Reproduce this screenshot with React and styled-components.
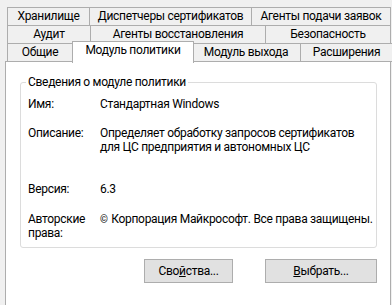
import React from "react";
import styled, { createGlobalStyle } from "styled-components";

const GlobalStyle = createGlobalStyle`
  html, body {
    margin: 0;
    padding: 0;
    background: #f0f0f0;
    overflow: hidden;
  }
  body {
    font-family: Roboto, "Liberation Sans", Arial, sans-serif;
    font-size: 12px;
    letter-spacing: -0.3px;
    color: #000000;
  }
`;

const Dialog = styled.div`
  width: 392px;
  height: 305px;
  padding-top: 7px;
  box-sizing: border-box;
`;

const TabStrip = styled.div`
  padding-left: 7px;
`;

const TabRow = styled.div`
  display: flex;
  align-items: flex-start;
  height: 19px;
  & + & {
    margin-top: -1px;
  }
`;

const Tab = styled.div`
  box-sizing: border-box;
  flex: none;
  width: ${p => p.$width}px;
  height: 19px;
  border: 1px solid #adadad;
  background: #f0f0f0;
  line-height: 17px;
  text-align: center;
  white-space: nowrap;
  & + & {
    margin-left: -1px;
  }
`;

const ActiveTab = styled(Tab)`
  position: relative;
  z-index: 1;
  height: 22px;
  background: #ffffff;
  border-bottom: none;
  margin-top: -2px;
  & + & {
    margin-left: -3px;
  }
  margin-right: -2px;
`;

const Panel = styled.div`
  margin: -1px 0 0 5px;
  width: 386px;
  height: 250px;
  box-sizing: border-box;
  border: 1px solid #adadad;
  background: #ffffff;
  padding: 12px 13px 0 14px;
`;

const GroupBox = styled.fieldset`
  margin: 0;
  padding: 0 0 7px 7px;
  border: 1px solid #dcdcdc;
  border-radius: 3px;
  min-width: 0;
`;

const Legend = styled.legend`
  padding: 0 2px;
  margin-left: -2px;
  line-height: 16px;
`;

const InfoRow = styled.div`
  display: grid;
  grid-template-columns: 72px 1fr;
  line-height: 14px;
  margin-top: ${p => p.$gap}px;
`;

const Label = styled.div``;

const Value = styled.div`
  white-space: nowrap;
`;

const Copyright = styled.span`
  font-size: 10px;
  margin-right: 1px;
`;

const ButtonBar = styled.div`
  display: flex;
  justify-content: flex-end;
  gap: 32px;
  margin-top: 11px;
`;

const Button = styled.button`
  box-sizing: border-box;
  width: ${p => p.$width}px;
  height: 24px;
  border: 1px solid #adadad;
  background: #e1e1e1;
  font-family: inherit;
  font-size: 12px;
  letter-spacing: inherit;
  color: #000000;
  padding: 0;
  u {
    text-decoration: underline;
  }
`;

const rowOne = [
  ["Хранилище", 83],
  ["Диспетчеры сертификатов", 163],
  ["Агенты подачи заявок", 140]
];

const rowTwo = [
  ["Аудит", 84],
  ["Агенты восстановления", 176],
  ["Безопасность", 126]
];

export default function App() {
  return (
    <Dialog>
      <GlobalStyle />
      <TabStrip>
        <TabRow>
          {rowOne.map(([title, w]) => (
            <Tab key={title} $width={w}>{title}</Tab>
          ))}
        </TabRow>
        <TabRow>
          {rowTwo.map(([title, w]) => (
            <Tab key={title} $width={w}>{title}</Tab>
          ))}
        </TabRow>
        <TabRow>
          <Tab $width={66}>Общие</Tab>
          <ActiveTab $width={122}>Модуль политики</ActiveTab>
          <Tab $width={110}>Модуль выхода</Tab>
          <Tab $width={93}>Расширения</Tab>
        </TabRow>
      </TabStrip>
      <Panel>
        <GroupBox>
          <Legend>Сведения о модуле политики</Legend>
          <InfoRow $gap={7}>
            <Label>Имя:</Label>
            <Value>Стандартная Windows</Value>
          </InfoRow>
          <InfoRow $gap={15}>
            <Label>Описание:</Label>
            <Value>
              Определяет обработку запросов сертификатов
              <br />
              для ЦС предприятия и автономных ЦС
            </Value>
          </InfoRow>
          <InfoRow $gap={28}>
            <Label>Версия:</Label>
            <Value>6.3</Value>
          </InfoRow>
          <InfoRow $gap={16}>
            <Label>
              Авторские
              <br />
              права:
            </Label>
            <Value>
              <Copyright>©</Copyright> Корпорация Майкрософт. Все права защищены.
            </Value>
          </InfoRow>
        </GroupBox>
        <ButtonBar>
          <Button $width={89}>
            Сво<u>й</u>ства...
          </Button>
          <Button $width={112}>
            <u>В</u>ыбрать...
          </Button>
        </ButtonBar>
      </Panel>
    </Dialog>
  );
}
